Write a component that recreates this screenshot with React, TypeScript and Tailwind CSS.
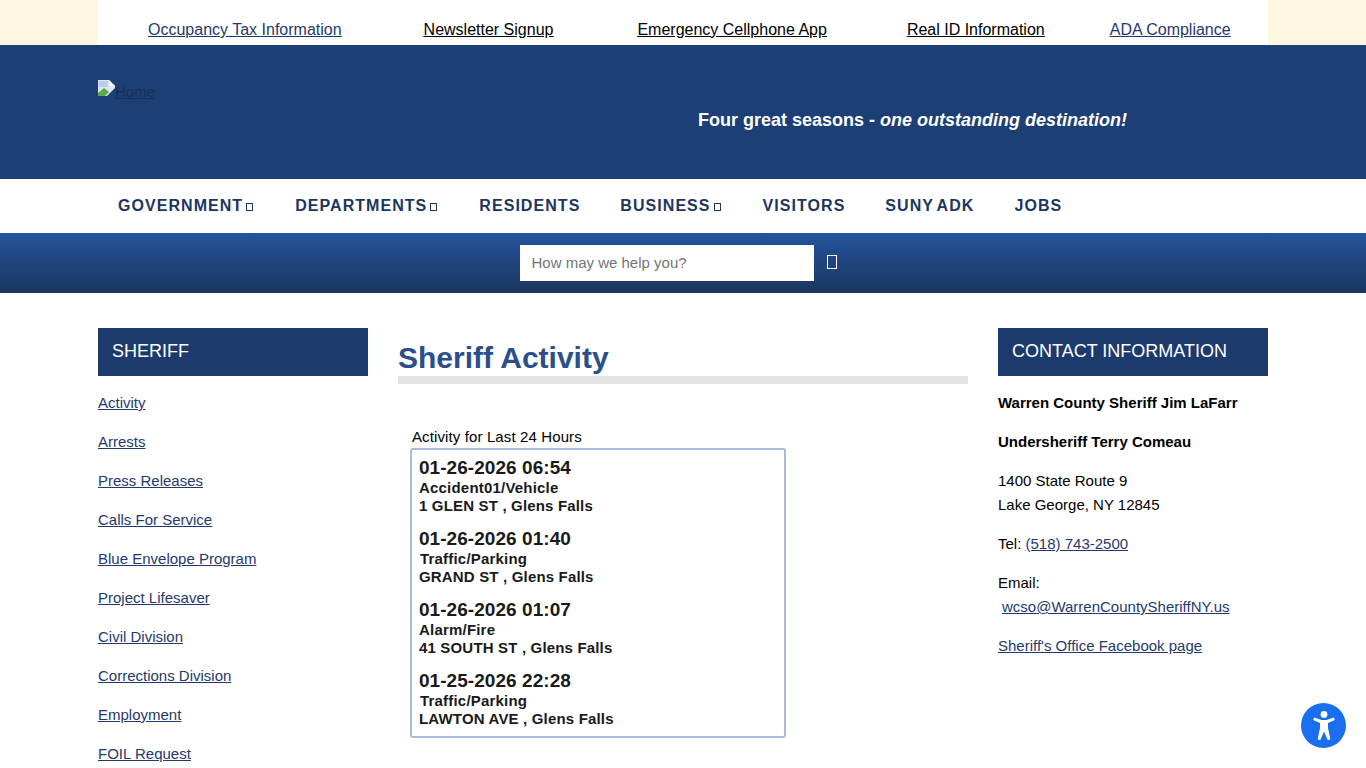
import React from "react";

const side = ["Activity","Arrests","Press Releases","Calls For Service","Blue Envelope Program","Project Lifesaver","Civil Division","Corrections Division","Employment","FOIL Request"];

const items = [
  ["01-26-2026 06:54","Accident01/Vehicle","1 GLEN ST , Glens Falls",""],
  ["01-26-2026 01:40","Traffic/Parking","GRAND ST , Glens Falls","ml-px"],
  ["01-26-2026 01:07","Alarm/Fire","41 SOUTH ST , Glens Falls",""],
  ["01-25-2026 22:28","Traffic/Parking","LAWTON AVE , Glens Falls","ml-px"],
];

function Tofu({ big }: { big?: boolean }) {
  return big
    ? <span className="block w-[10px] h-[14px] border border-white" />
    : <span className="inline-block w-[7px] h-[8px] border border-[#1c365f] ml-[3px] align-baseline" />;
}

function NavItem({ label, tofu, ml }: { label: string; tofu?: boolean; ml: string }) {
  return (
    <a className={`${ml} text-[16px] leading-[20px] font-bold tracking-[1.05px] [word-spacing:-2px] text-[#1c365f] whitespace-nowrap`}>
      {label}{tofu && <Tofu />}
    </a>
  );
}

export default function App() {
  return (
    <div className="h-screen overflow-hidden bg-white relative font-['Liberation_Sans',Arial,sans-serif] text-[16px] text-black">
      <div className="h-[45px] bg-[#fff7df]">
        <div className="mx-auto w-[1170px] h-[45px] bg-white flex items-start pt-[20px] text-[16px] leading-[20px] underline">
          <a className="ml-[50px] text-[#1f3a6b]">Occupancy Tax Information</a>
          <a className="ml-[82px] text-black">Newsletter Signup</a>
          <a className="ml-[84px] text-black">Emergency Cellphone App</a>
          <a className="ml-[80px] text-black">Real ID Information</a>
          <a className="ml-[65px] text-[#1f3a6b]">ADA Compliance</a>
        </div>
      </div>

      <header className="h-[134px] bg-[#1c3f75]">
        <div className="mx-auto w-[1170px] h-full flex items-start">
          <div className="w-[600px] pt-[35px] flex items-start">
            <svg width="17" height="16" viewBox="0 0 17 16" className="shrink-0">
              <path d="M0 0h11l6 6v10H0z" fill="#dfe6f3" />
              <path d="M11 0v6h6z" fill="#ffffff" />
              <path d="M1 1h9v6H1z" fill="#b8cdf0" />
              <path d="M0 16v-3l6-5 5 4-4 4z" fill="#5fa84a" />
              <path d="M9 16l8-8v8z" fill="#1c3f75" />
            </svg>
            <span className="text-[#172f58] underline text-[15px] leading-[16px] mt-[4px]">Home</span>
          </div>
          <div className="pt-[63px] text-white font-bold text-[18px] leading-[24px] whitespace-nowrap">
            Four great seasons - <em>one outstanding destination!</em>
          </div>
        </div>
      </header>

      <nav className="h-[54px] bg-white">
        <div className="mx-auto w-[1170px] h-full flex items-center pl-[20px]">
          <NavItem label="GOVERNMENT" tofu ml="" />
          <NavItem label="DEPARTMENTS" tofu ml="ml-[42px]" />
          <NavItem label="RESIDENTS" ml="ml-[42px]" />
          <NavItem label="BUSINESS" tofu ml="ml-[40px]" />
          <NavItem label="VISITORS" ml="ml-[42px]" />
          <NavItem label="SUNY ADK" ml="ml-[40px]" />
          <NavItem label="JOBS" ml="ml-[40px]" />
        </div>
      </nav>

      <div className="h-[60px] bg-gradient-to-b from-[#24549c] to-[#1a3560] flex items-start justify-center pt-[12px]">
        <div className="w-[294px] h-[36px] bg-white ml-[-10px] px-[12px] flex items-center text-[15px] text-[#757575]">How may we help you?</div>
        <div className="ml-[13px] mt-[10px]"><Tofu big /></div>
      </div>

      <main className="mx-auto w-[1170px] flex items-start pt-[35px]">
        <aside className="w-[270px] shrink-0">
          <div className="h-[48px] bg-[#1c3a6b] text-white text-[18px] px-[14px] pb-[2px] flex items-center">SHERIFF</div>
          <ul className="mt-[15px] flex flex-col gap-[15px]">
            {side.map((s) => (
              <li key={s} className="leading-[24px] text-[15px] underline text-[#1f3a6b]">{s}</li>
            ))}
          </ul>
        </aside>

        <section className="w-[570px] ml-[30px] shrink-0">
          <h1 className="text-[30px] leading-[33px] font-bold text-[#2a4f8a] mt-[13px]">Sheriff Activity</h1>
          <div className="h-[8px] bg-[#e3e3e3] mt-[2px]" />
          <div className="ml-[14px] mt-[43px] text-[15px] leading-[20px] tracking-[0.12px]">Activity for Last 24 Hours</div>
          <div className="ml-[12px] mt-px w-[376px] h-[290px] border-2 border-[#a9bbd9] rounded-[3px] pl-[7px] pt-[7px]">
            {items.map(([d, t, a, m]) => (
              <div key={d} className="h-[71px] font-bold text-[#1a1a1a]">
                <div className="text-[19px] leading-[22px] tracking-[0.05px]">{d}</div>
                <div className={`${m} text-[15px] leading-[18px] tracking-[0.2px]`}>{t}</div>
                <div className="text-[15px] leading-[18px] tracking-[0.17px]">{a}</div>
              </div>
            ))}
          </div>
        </section>

        <aside className="w-[270px] ml-[30px] shrink-0 text-[15px] leading-[24px]">
          <div className="h-[48px] bg-[#1c3a6b] text-white text-[18px] px-[14px] pb-[2px] flex items-center">CONTACT INFORMATION</div>
          <p className="mt-[15px] font-bold">Warren County Sheriff Jim LaFarr</p>
          <p className="mt-[15px] font-bold">Undersheriff Terry Comeau</p>
          <p className="mt-[15px]">1400 State Route 9<br />Lake George, NY 12845</p>
          <p className="mt-[15px]">Tel: <span className="underline text-[#1f3a6b]">(518) 743-2500</span></p>
          <p className="mt-[15px]">Email:<br /><span className="underline text-[#1f3a6b] ml-[4px]">wcso@WarrenCountySheriffNY.us</span></p>
          <p className="mt-[15px] underline text-[#1f3a6b]">Sheriff's Office Facebook page</p>
        </aside>
      </main>

      <div className="absolute left-[1301px] top-[703px] w-[45px] h-[45px] rounded-full bg-[#1a6ef0] flex items-center justify-center">
        <svg width="22" height="30" viewBox="0 0 22 30" fill="white">
          <circle cx="11" cy="3.4" r="3.4" />
          <path d="M0.2 9 L1.2 6.6 L8.5 9 H13.5 L20.8 6.6 L21.8 9 L15 12 V17 L17.3 28.2 L14.8 29.2 L11 20.5 L7.2 29.2 L4.7 28.2 L7 17 V12 Z" />
        </svg>
      </div>
    </div>
  );
}
